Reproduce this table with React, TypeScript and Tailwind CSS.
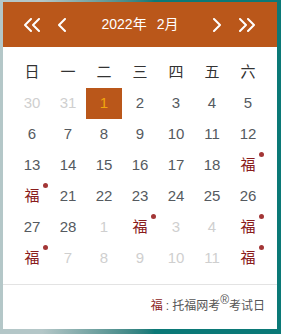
import React from 'react';

type Day = { n: number | string; faded?: boolean; fu?: boolean; selected?: boolean };

const weekdays = ['日', '一', '二', '三', '四', '五', '六'];

const days: Day[] = [
  { n: 30, faded: true }, { n: 31, faded: true }, { n: 1, selected: true }, { n: 2 }, { n: 3 }, { n: 4 }, { n: 5 },
  { n: 6 }, { n: 7 }, { n: 8 }, { n: 9 }, { n: 10 }, { n: 11 }, { n: 12 },
  { n: 13 }, { n: 14 }, { n: 15 }, { n: 16 }, { n: 17 }, { n: 18 }, { n: 19, fu: true },
  { n: 20, fu: true }, { n: 21 }, { n: 22 }, { n: 23 }, { n: 24 }, { n: 25 }, { n: 26 },
  { n: 27 }, { n: 28 }, { n: 1, faded: true }, { n: 2, fu: true }, { n: 3, faded: true }, { n: 4, faded: true }, { n: 5, fu: true },
  { n: 6, fu: true }, { n: 7, faded: true }, { n: 8, faded: true }, { n: 9, faded: true }, { n: 10, faded: true }, { n: 11, faded: true }, { n: 12, fu: true },
];

const Chevron = ({ dir, double }: { dir: 'l' | 'r'; double?: boolean }) => {
  const w = double ? 17 : 9;
  const pts = (x: number) =>
    dir === 'l' ? `${x + 7},1 ${x + 1},7 ${x + 7},13` : `${x + 1},1 ${x + 7},7 ${x + 1},13`;
  return (
    <svg width={w} height={14} viewBox={`0 0 ${w} 14`} fill="none" stroke="white" strokeWidth={2} strokeLinecap="round" strokeLinejoin="round">
      <polyline points={pts(0)} />
      {double && <polyline points={pts(8)} />}
    </svg>
  );
};

const App: React.FC = () => {
  return (
    <div
      className="w-[281px] h-[334px] bg-linear-to-r from-[#b4c7c8] from-15% to-[#0b7977] to-55% pt-[2px] pl-[3px]"
      style={{ fontFamily: '"Liberation Sans", "Noto Sans CJK SC", sans-serif' }}
    >
      <div className="w-[274px] h-[327px] bg-white flex flex-col">
        {/* header */}
        <div className="h-[45px] bg-[#ba571a] flex items-center px-[21px] text-white text-[14px]">
          <Chevron dir="l" double />
          <div className="ml-[17px]"><Chevron dir="l" /></div>
          <div className="flex-1 text-center">
            <span>2022年</span>
            <span className="ml-[10px]">2月</span>
          </div>
          <div className="mr-[17px]"><Chevron dir="r" /></div>
          <Chevron dir="r" double />
        </div>

        {/* grid */}
        <div className="pt-[10px] px-[11px]">
          <div className="grid grid-cols-[repeat(7,36px)] auto-rows-[31px]">
            {weekdays.map((w) => (
              <div key={w} className="flex items-center justify-center text-[15px] text-[#333]">
                {w}
              </div>
            ))}
            {days.map((d, i) => (
              <div
                key={i}
                className={`relative flex items-center justify-center text-[15px] ${
                  d.selected
                    ? 'bg-[#ba571a] text-[#f2a60c]'
                    : d.fu
                    ? 'text-[#8a1c1c] text-[14px]'
                    : d.faded
                    ? 'text-[#cfcfcf]'
                    : 'text-[#555a60]'
                }`}
              >
                {d.fu ? '福' : d.n}
                {d.fu && <span className="absolute left-[29px] top-[2px] w-[5px] h-[5px] rounded-full bg-[#a33636]" />}
              </div>
            ))}
          </div>
        </div>

        <div className="mt-[10px] border-t border-[#e3e3e3]" />

        <div className="flex-1 flex items-center justify-end pr-[12px] pb-[2px] text-[12px] text-[#555]">
          <span className="text-[#8a1c1c]">福</span>
          <span className="mx-[3px]">:</span>
          <span>托福网考</span>
          <sup className="text-[12px] -top-[6px] leading-none">®</sup>
          <span>考试日</span>
        </div>
      </div>
    </div>
  );
};

export default App;
